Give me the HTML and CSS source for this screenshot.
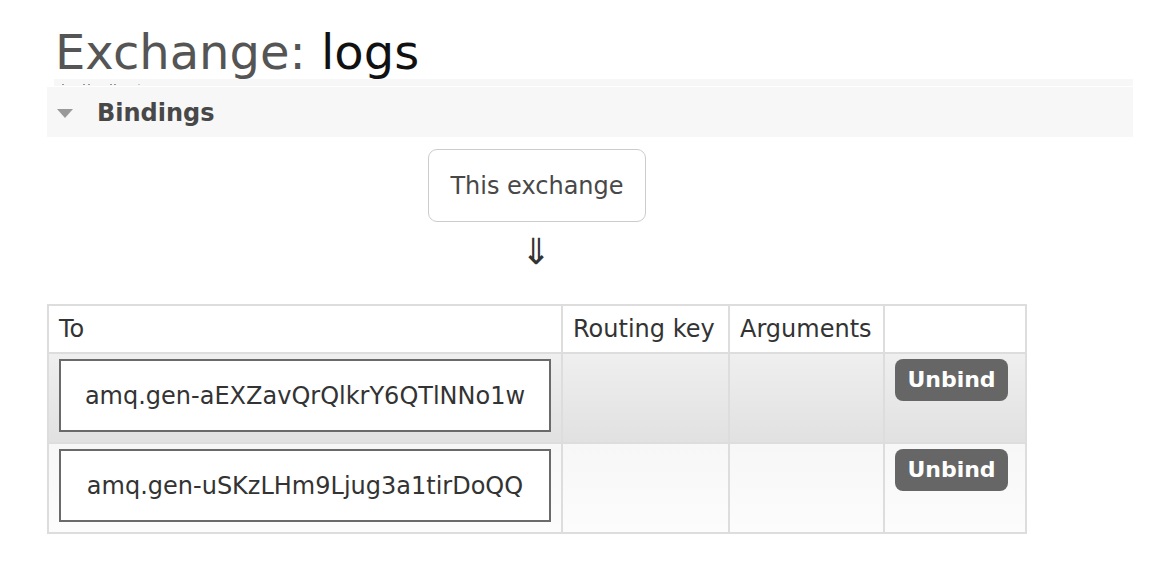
FILE: index.html
```html
<!DOCTYPE html>
<html>
<head>
<meta charset="utf-8">
<link rel="stylesheet" href="styles.css">
</head>
<body>
<div class="page">
  <h1 class="title"><span class="title-label">Exchange:</span> <span class="title-name">logs</span></h1>
  <div class="prev-section">
    <i class="dot d1"></i><i class="dot d2"></i><i class="dot d3"></i><i class="dot d4"></i><i class="dot d5"></i><i class="dot d6"></i>
  </div>
  <div class="section">
    <div class="section-head">
      <span class="tri"></span>
      <span class="section-title">Bindings</span>
    </div>
    <div class="section-body">
      <div class="bindings-wrapper">
        <div class="this-box">This exchange</div>
        <div class="arrow">&#8659;</div>
        <table class="bindings">
          <thead>
            <tr>
              <th class="col-to">To</th>
              <th class="col-key">Routing key</th>
              <th class="col-args">Arguments</th>
              <th class="col-act"></th>
            </tr>
          </thead>
          <tbody>
            <tr class="alt1">
              <td><span class="queue">amq.gen-aEXZavQrQlkrY6QTlNNo1w</span></td>
              <td></td>
              <td></td>
              <td class="act"><button class="btn">Unbind</button></td>
            </tr>
            <tr class="alt2">
              <td><span class="queue">amq.gen-uSKzLHm9Ljug3a1tirDoQQ</span></td>
              <td></td>
              <td></td>
              <td class="act"><button class="btn">Unbind</button></td>
            </tr>
          </tbody>
        </table>
      </div>
    </div>
  </div>
</div>
</body>
</html>
```

FILE: styles.css
```css
html, body {
  margin: 0;
  padding: 0;
  background: #fff;
}

body {
  font-family: "DejaVu Sans", Verdana, sans-serif;
  color: #484848;
}

.page {
  padding-left: 47px;
  width: 1086px;
}

.title {
  margin: 24px 0 0 8px;
  font-size: 48px;
  line-height: 56px;
  font-weight: normal;
  color: #555;
  height: 55px;
}

.title-name {
  color: #111;
}

.prev-section {
  height: 7px;
  margin-left: 7px;
  background: #f7f7f7;
  border-bottom: 1px solid #fff;
  display: flex;
  align-items: flex-end;
}

.dot {
  display: block;
  width: 2px;
  height: 1px;
  background: #999;
  margin-bottom: 1px;
}

.d1 { margin-left: 8px; }
.d2 { margin-left: 19px; }
.d3 { margin-left: 3px; }
.d4 { margin-left: 20px; }
.d5 { margin-left: 2px; }
.d6 { margin-left: 22px; background: #ccc; }

.section-head {
  height: 50px;
  background: #f7f7f7;
  display: flex;
  align-items: center;
  padding-left: 10px;
}

.tri {
  width: 0;
  height: 0;
  border-left: 8px solid transparent;
  border-right: 8px solid transparent;
  border-top: 9px solid #999;
  margin-top: 3px;
}

.section-title {
  font-size: 24px;
  font-weight: bold;
  color: #484848;
  margin-left: 24px;
  margin-top: 1px;
}

.section-body {
  padding-top: 12px;
}

.bindings-wrapper {
  display: inline-block;
  text-align: center;
}

.this-box {
  display: inline-block;
  border: 1px solid #ccc;
  border-radius: 9px;
  padding: 0 21px;
  height: 71px;
  line-height: 73px;
  font-size: 24px;
  color: #484848;
}

.arrow {
  font-size: 36px;
  line-height: 40px;
  height: 40px;
  margin-top: 10px;
  margin-right: 2px;
  color: #333;
}

.bindings {
  border-collapse: collapse;
  margin-top: 32px;
  text-align: left;
  font-size: 24px;
}

.bindings th,
.bindings td {
  border: 2px solid #ddd;
  padding: 0;
}

.bindings th {
  font-weight: normal;
  color: #333;
  height: 46px;
  padding: 0 10px;
  background: #fff;
}

.col-to { width: 492px; }
.col-key { width: 145px; }
.col-args { width: 133px; }
.col-act { width: 120px; }

.bindings td {
  vertical-align: top;
}

.alt1 td {
  background: linear-gradient(#efefef, #e1e1e1);
}

.alt2 td {
  background: linear-gradient(#f7f7f7, #fcfcfc);
}

.queue {
  display: block;
  margin: 5px 10px 10px 10px;
  height: 69px;
  line-height: 71px;
  border: 2px solid #6a6a6a;
  background: #fff;
  text-align: center;
  color: #333;
  font-size: 24px;
}

.act {
  padding: 5px 0 0 10px !important;
}

.btn {
  display: block;
  font-family: "DejaVu Sans", Verdana, sans-serif;
  font-size: 22px;
  font-weight: bold;
  color: #fff;
  background: #666;
  border: none;
  border-radius: 8px;
  height: 42px;
  width: 113px;
  padding: 0;
  line-height: 40px;
}
```
